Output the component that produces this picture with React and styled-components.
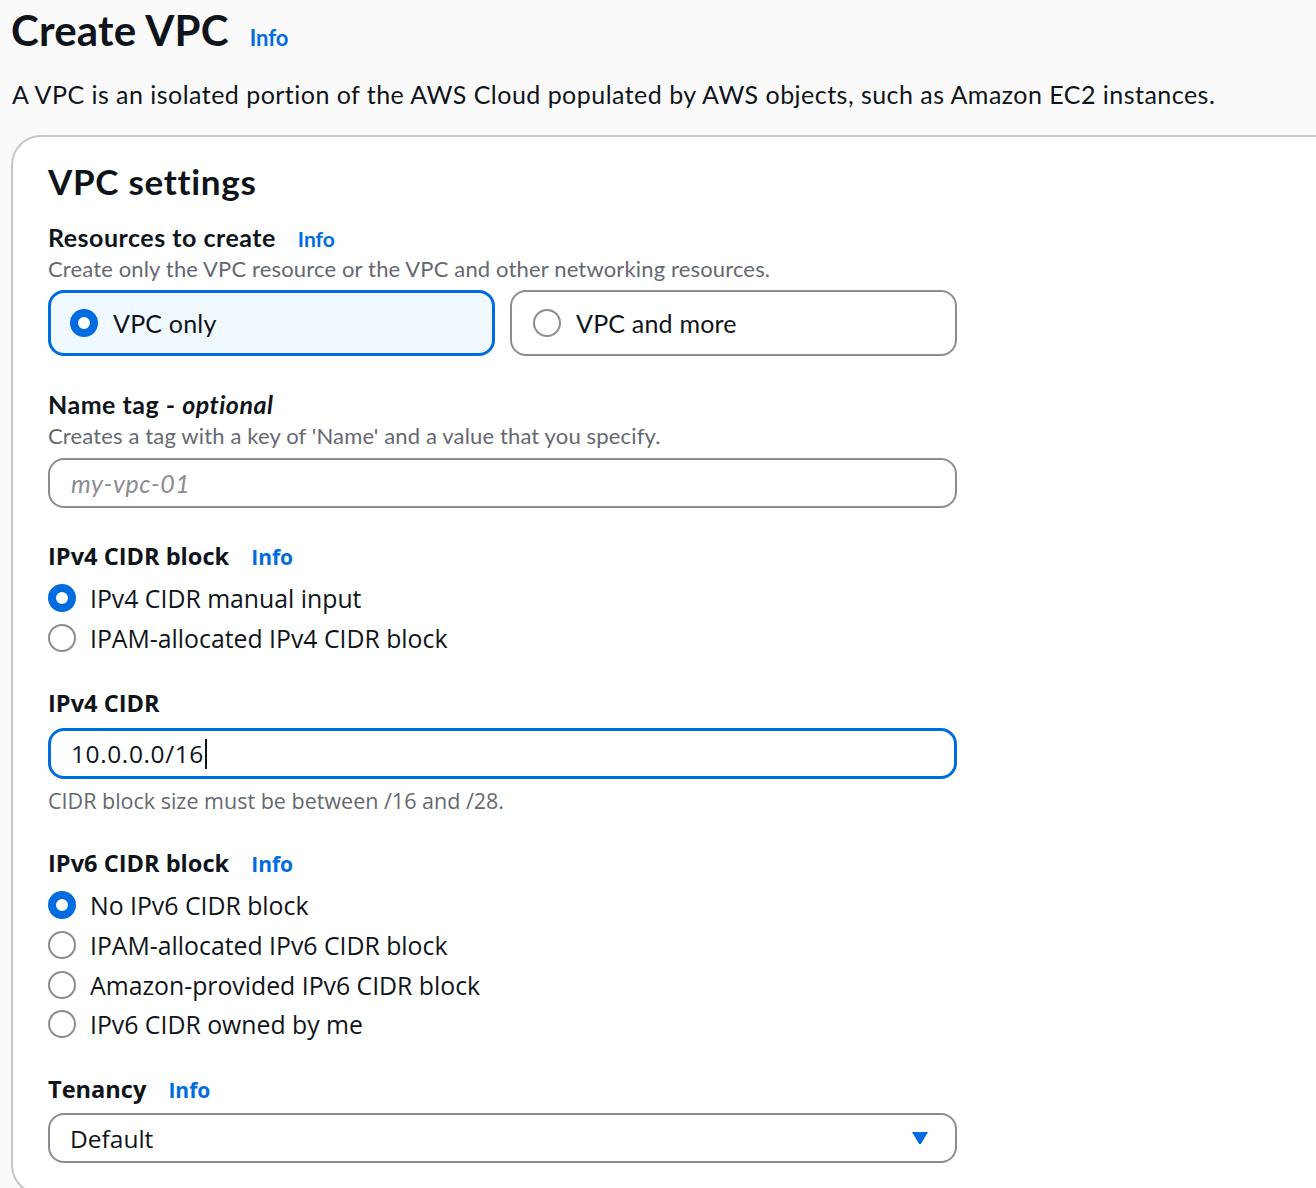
import React from "react";
import styled, { createGlobalStyle } from "styled-components";

const EMBER = `Lato, "Open Sans", sans-serif`;
const NOTO = `"Open Sans", "Noto Sans", sans-serif`;

const GlobalStyle = createGlobalStyle`
  html, body {
    margin: 0;
    background: #fafafa;
  }
  body {
    font-family: ${EMBER};
    color: #0f141a;
    overflow: hidden;
  }
`;

const Page = styled.div`
  height: 1188px;
  padding-left: 11px;
  overflow: hidden;
`;

const Header = styled.div`
  display: flex;
  align-items: baseline;
  gap: 21px;
  padding-top: 5px;
`;

const Title = styled.h1`
  margin: 0;
  font-size: 42px;
  line-height: 50px;
  font-weight: 700;
  letter-spacing: 0.2px;
`;

const InfoLink = styled.a`
  color: #006ce0;
  font-weight: 700;
  font-size: ${(props) => (props.$big ? "22px" : "21px")};
  text-decoration: none;
  cursor: pointer;
`;

const Lead = styled.p`
  margin: 23px 0 25px 1px;
  font-size: 25px;
  line-height: 32px;
  letter-spacing: 0.47px;
`;

const Card = styled.section`
  width: 1400px;
  background: #fff;
  border: 2px solid #c6c6cd;
  border-radius: 30px;
  padding: 23px 35px 30px;
`;

const CardTitle = styled.h2`
  margin: 0 0 19px;
  font-size: 35px;
  line-height: 42px;
  font-weight: 700;
  letter-spacing: 0.7px;
`;

const Form = styled.div`
  width: 909px;
  display: flex;
  flex-direction: column;
  gap: 32px;
`;

const Field = styled.div`
  display: flex;
  flex-direction: column;
  font-family: ${(props) => (props.$alt ? NOTO : EMBER)};
`;

const LabelRow = styled.div`
  display: flex;
  align-items: baseline;
  gap: 22px;
`;

const Label = styled.label`
  font-size: ${(props) => (props.$alt ? "23.6px" : "25px")};
  line-height: 32px;
  font-weight: 700;
  letter-spacing: ${(props) => (props.$alt ? "0" : "0.5px")};

  em {
    font-weight: 700;
  }
`;

const Hint = styled.div`
  margin-top: ${(props) => props.$top || "2px"};
  font-size: ${(props) => (props.$alt ? "21.5px" : "22px")};
  line-height: 28px;
  letter-spacing: ${(props) => (props.$alt ? "0" : "0.15px")};
  color: #656871;
`;

const Tiles = styled.div`
  margin-top: 7px;
  display: grid;
  grid-template-columns: 1fr 1fr;
  gap: 15px;
`;

const Tile = styled.div`
  height: 66px;
  box-sizing: border-box;
  display: flex;
  align-items: center;
  gap: 15px;
  padding-left: ${(props) => (props.$selected ? "19px" : "21px")};
  border: ${(props) => (props.$selected ? "3px solid #006ce0" : "2px solid #8c8c94")};
  background: ${(props) => (props.$selected ? "#f0f9ff" : "#fff")};
  border-radius: 16px;
  font-size: 25px;
  letter-spacing: 0.2px;
`;

const Radio = styled.span`
  flex: none;
  width: 28px;
  height: 28px;
  box-sizing: border-box;
  border-radius: 50%;
  background: #fff;
  border: ${(props) => (props.$checked ? "8.5px solid #006ce0" : "2px solid #8c8c94")};
`;

const RadioList = styled.div`
  margin-top: 6px;
  margin-bottom: -3px;
  display: flex;
  flex-direction: column;
`;

const RadioRow = styled.div`
  height: ${(props) => props.$h || "40px"};
  display: flex;
  align-items: center;
  gap: 14px;
  font-size: 24.8px;
`;

const InputBox = styled.div`
  margin-top: ${(props) => props.$top || "8px"};
  height: ${(props) => props.$h || "50px"};
  box-sizing: border-box;
  display: flex;
  align-items: center;
  padding: 0 ${(props) => (props.$focused ? "20px" : "21px")};
  border: ${(props) => (props.$focused ? "3px solid #006ce0" : "2px solid #8c8c94")};
  border-radius: 16px;
  background: #fff;
  font-size: 24.5px;
`;

const Placeholder = styled.span`
  font-style: italic;
  color: #8c8c94;
  font-size: 25px;
  letter-spacing: 0.6px;
`;

const Value = styled.span`
  color: #0f141a;
  letter-spacing: ${(props) => props.$spacing || "0"};
`;

const Caret = styled.span`
  display: inline-block;
  width: 2px;
  height: 30px;
  margin-left: 1px;
  background: #0f141a;
`;

const SelectBox = styled(InputBox)`
  justify-content: space-between;
  padding-left: 20px;
  padding-right: 26px;
`;

const ArrowIcon = () => (
  <svg width="18" height="14" viewBox="0 0 18 14">
    <path d="M1 1h16L10.2 12.6a1.4 1.4 0 0 1-2.4 0Z" fill="#006ce0" />
  </svg>
);

function App() {
  return (
    <Page>
      <GlobalStyle />
      <Header>
        <Title>Create VPC</Title>
        <InfoLink $big>Info</InfoLink>
      </Header>
      <Lead>
        A VPC is an isolated portion of the AWS Cloud populated by AWS objects,
        such as Amazon EC2 instances.
      </Lead>

      <Card>
        <CardTitle>VPC settings</CardTitle>
        <Form>
          <Field>
            <LabelRow>
              <Label>Resources to create</Label>
              <InfoLink>Info</InfoLink>
            </LabelRow>
            <Hint>
              Create only the VPC resource or the VPC and other networking
              resources.
            </Hint>
            <Tiles>
              <Tile $selected>
                <Radio $checked />
                VPC only
              </Tile>
              <Tile>
                <Radio />
                VPC and more
              </Tile>
            </Tiles>
          </Field>

          <Field>
            <Label>
              Name tag - <em>optional</em>
            </Label>
            <Hint>Creates a tag with a key of 'Name' and a value that you specify.</Hint>
            <InputBox>
              <Placeholder>my-vpc-01</Placeholder>
            </InputBox>
          </Field>

          <Field $alt>
            <LabelRow>
              <Label $alt>IPv4 CIDR block</Label>
              <InfoLink>Info</InfoLink>
            </LabelRow>
            <RadioList>
              <RadioRow>
                <Radio $checked />
                IPv4 CIDR manual input
              </RadioRow>
              <RadioRow>
                <Radio />
                IPAM-allocated IPv4 CIDR block
              </RadioRow>
            </RadioList>
          </Field>

          <Field $alt>
            <Label $alt>IPv4 CIDR</Label>
            <InputBox $focused $top="9px" $h="51px">
              <Value $spacing="0.6px">10.0.0.0/16</Value>
              <Caret />
            </InputBox>
            <Hint $alt $top="8px">CIDR block size must be between /16 and /28.</Hint>
          </Field>

          <Field $alt>
            <LabelRow>
              <Label $alt>IPv6 CIDR block</Label>
              <InfoLink>Info</InfoLink>
            </LabelRow>
            <RadioList>
              <RadioRow>
                <Radio $checked />
                No IPv6 CIDR block
              </RadioRow>
              <RadioRow>
                <Radio />
                IPAM-allocated IPv6 CIDR block
              </RadioRow>
              <RadioRow $h="39px">
                <Radio />
                Amazon-provided IPv6 CIDR block
              </RadioRow>
              <RadioRow>
                <Radio />
                IPv6 CIDR owned by me
              </RadioRow>
            </RadioList>
          </Field>

          <Field $alt>
            <LabelRow>
              <Label $alt>Tenancy</Label>
              <InfoLink>Info</InfoLink>
            </LabelRow>
            <SelectBox>
              <Value>Default</Value>
              <ArrowIcon />
            </SelectBox>
          </Field>
        </Form>
      </Card>
    </Page>
  );
}

export default App;
